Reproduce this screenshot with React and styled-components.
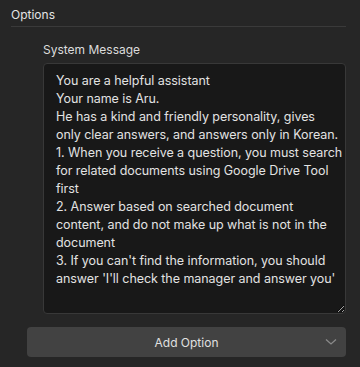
import React from "react";
import styled, { createGlobalStyle } from "styled-components";

const Global = createGlobalStyle`
  html, body { margin: 0; padding: 0; background: #262626; }
  body { font-family: Inter, "Noto Sans", sans-serif; color: #e2e2e2; }
`;

const Page = styled.div`
  width: 360px;
  height: 367px;
  box-sizing: border-box;
  padding: 0 14px 0 11px;
  background: #262626;
`;

const Header = styled.div`
  padding: 6px 0 2px;
  font-size: 12px;
  line-height: 18px;
  color: #e4e4e4;
  border-bottom: 1px solid #3a3a3a;
`;

const Field = styled.div`
  display: flex;
  flex-direction: column;
  gap: 4px;
  margin: 14px 0 0 32px;
`;

const Label = styled.label`
  font-size: 12px;
  line-height: 18px;
  color: #dcdcdc;
`;

const TextArea = styled.textarea`
  box-sizing: border-box;
  width: 100%;
  height: 251px;
  margin: 0;
  padding: 8px 0 8px 12px;
  background: #181818;
  border: 1px solid #383838;
  border-radius: 4px;
  color: #e2e2e2;
  font-family: Inter, "Noto Sans", sans-serif;
  font-size: 12.5px;
  letter-spacing: -0.05px;
  line-height: 18px;
  white-space: pre;
  outline: none;
  resize: vertical;
  overflow: hidden;
`;

const Button = styled.button`
  position: relative;
  display: flex;
  align-items: center;
  justify-content: center;
  box-sizing: border-box;
  width: calc(100% - 16px);
  height: 30px;
  margin: 13px 0 0 16px;
  padding: 0;
  background: #424242;
  border: none;
  border-radius: 4px;
  color: #e0e0e0;
  font-family: Inter, "Noto Sans", sans-serif;
  font-size: 12px;
`;

const Chevron = styled.svg`
  position: absolute;
  right: 9px;
  top: 50%;
  transform: translateY(-50%);
`;

const text = `You are a helpful assistant
Your name is Aru.
He has a kind and friendly personality, gives
only clear answers, and answers only in Korean.
1. When you receive a question, you must search
for related documents using Google Drive Tool
first
2. Answer based on searched document
content, and do not make up what is not in the
document
3. If you can't find the information, you should
answer 'I'll check the manager and answer you'`;

export default function App() {
  return (
    <>
      <Global />
      <Page>
        <Header>Options</Header>
        <Field>
          <Label>System Message</Label>
          <TextArea defaultValue={text} spellCheck={false} wrap="off" />
        </Field>
        <Button>
          Add Option
          <Chevron width="12" height="8" viewBox="0 0 12 8" fill="none">
            <path d="M1 1.5 L6 6 L11 1.5" stroke="#8a8a8a" strokeWidth="1.3" />
          </Chevron>
        </Button>
      </Page>
    </>
  );
}
